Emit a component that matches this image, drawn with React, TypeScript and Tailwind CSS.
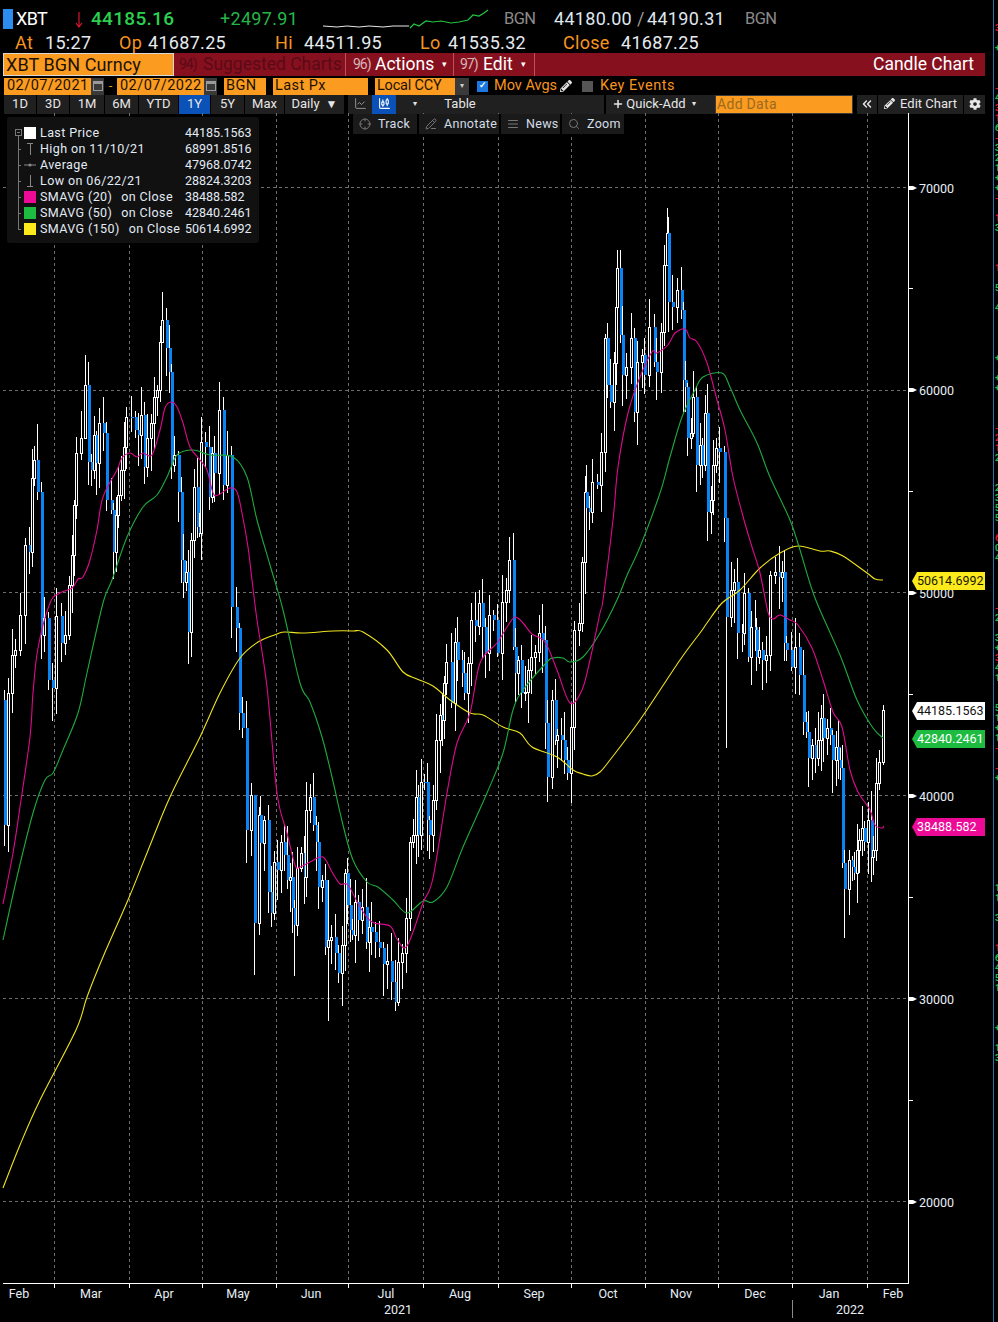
import type { ReactNode } from "react";
import { ChartCandlestick, ChartLine, Crosshair, PencilLine, AlignJustify, Search, ChevronsLeft, Plus } from "lucide-react";
import { FaCog, FaPencilAlt } from "react-icons/fa";

const FONT = "font-['Roboto',sans-serif]";

// [x, close y] in page pixels; a candle's body runs from the previous close to this one
const CLOSES: number[][] = [
  [5, 825], [9, 693], [13, 655], [16, 650], [21, 615], [26, 545], [30, 552], [33, 478], [35, 460], [38, 492], [42, 635], [45, 618], [49, 680], [53, 688], [57, 616], [62, 643], [66, 635], [70, 585],
  [73, 555], [75, 505], [77, 453], [82, 438], [86, 385], [89, 462], [92, 470], [95, 435], [97, 463], [100, 423], [104, 433], [107, 500], [112, 510], [114, 552], [117, 515], [119, 495], [122, 470], [125, 447], [127, 417], [132, 417], [136, 430], [139, 435], [142, 415], [145, 467], [148, 438], [152, 423], [155, 397], [158, 390], [161, 342], [163, 320], [167, 348], [170, 372], [172, 465], [175, 455], [179, 492], [182, 560], [184, 582], [187, 572], [189, 632],
  [192, 540], [195, 487], [198, 527], [200, 533], [202, 442], [206, 447], [210, 497], [213, 453], [215, 473], [220, 410], [224, 485], [228, 455], [232, 607], [237, 628], [240, 713], [243, 728], [247, 830], [252, 795], [255, 923], [260, 815], [261, 843], [265, 820], [269, 892], [272, 913], [275, 862], [278, 870], [282, 842], [285, 855], [288, 880], [291, 877], [293, 908], [295, 925], [298, 868],
  [302, 853], [305, 877], [307, 810], [311, 797], [314, 825], [317, 842], [319, 887], [323, 880], [326, 947], [329, 940], [332, 937], [336, 953], [339, 973], [343, 945], [346, 873], [348, 905], [351, 930], [353, 935], [356, 902], [359, 920], [363, 907], [367, 942], [370, 927], [372, 932], [376, 942], [380, 948], [384, 964], [388, 961], [392, 982], [396, 1002], [399, 962], [403, 953], [407, 918], [411, 842], [414, 835], [417, 797], [419, 835], [422, 782], [425, 782], [428, 820], [430, 835], [434, 800], [437, 740], [441, 715], [443, 720], [445, 683], [447, 662], [452, 703], [456, 642], [458, 660], [463, 673], [465, 693], [469, 663], [472, 620], [476, 626], [480, 603], [483, 627], [486, 653], [490, 615], [494, 620], [498, 653], [503, 602], [507, 590], [510, 560], [514, 647], [516, 673], [519, 660], [522, 693], [526, 692], [529, 670], [532, 657], [536, 652], [540, 633], [543, 640], [546, 723], [548, 777], [553, 700], [556, 740], [558, 735], [562, 740], [565, 760], [568, 773], [572, 727], [575, 630], [580, 623], [583, 562], [586, 492], [587, 508], [590, 512], [593, 482], [598, 485], [602, 452], [606, 338], [608, 385], [611, 402], [615, 363], [617, 307], [618, 268], [621, 335], [623, 375], [627, 367], [632, 338], [635, 412], [638, 362], [643, 355], [645, 375], [650, 327], [655, 362], [657, 372], [662, 332], [665, 265], [668, 233], [669, 302], [673, 307], [678, 290], [682, 310], [684, 380], [686, 387], [688, 438], [692, 433], [694, 397], [697, 465], [701, 445], [703, 465], [706, 413], [708, 512], [712, 500], [714, 465], [717, 448], [720, 452], [725, 518], [727, 617], [732, 590], [735, 582], [738, 633], [743, 633], [745, 593], [749, 657], [752, 627], [756, 630], [757, 657], [760, 650], [763, 660], [767, 655], [771, 575], [776, 572], [780, 577], [783, 572], [785, 643], [787, 650], [792, 667], [796, 647], [800, 675], [804, 722], [807, 732], [809, 758], [813, 745], [816, 758], [819, 740], [822, 718], [824, 738], [828, 728], [831, 735], [833, 760], [837, 747], [839, 760], [841, 768], [843, 863], [845, 889], [850, 860], [853, 867], [855, 873], [858, 850], [860, 840], [863, 828], [865, 842], [869, 820], [872, 857], [874, 850], [877, 783], [880, 762], [884, 710],
];

// the long wicks that stand out, x -> [high y, low y]
const SPIKES: Record<number, number[]> = {
  5: [690, 846], 38: [424, 500], 86: [355, 400], 163: [292, 330], 248: [780, 997], 255: [800, 975], 295: [900, 976], 329: [880, 1021], 396: [960, 1011], 514: [533, 650], 548: [700, 802], 618: [250, 290], 668: [208, 240], 727: [520, 748], 845: [850, 938], 850: [850, 915], 884: [705, 765], 880: [750, 790],
};

const MAGENTA = "3,904 13,853 20,807 30,737 33,693 38,648 50,603 60,593 72,588 78,579 83,577 90,560 97,530 103,497 117,470 122,458 130,453 137,457 143,453 152,455 160,430 165,408 171,402 177,407 183,423 190,447 200,460 207,470 213,493 218,495 230,488 237,492 242,513 248,547 252,580 257,620 267,687 277,793 287,833 295,865 300,867 310,862 323,857 332,872 340,884 348,885 360,907 372,922 390,926 397,939 407,946 423,903 433,878 447,793 457,743 470,713 480,663 497,643 507,627 515,617 523,623 532,634 545,642 557,670 570,703 582,690 590,660 600,613 603,600 613,520 618,467 628,413 640,377 652,352 657,353 668,345 675,333 685,329 690,338 697,342 707,363 717,400 725,430 733,477 744,520 752,547 760,573 768,612 773,619 780,615 790,620 798,625 812,648 823,680 833,712 842,727 850,770 858,792 870,810 875,825 882,828 884,826";
const GREEN = "3,940 17,877 33,813 45,780 53,773 63,750 78,713 87,673 103,603 112,580 127,537 143,507 157,495 167,477 177,455 193,450 210,455 233,457 247,477 257,520 270,565 283,610 300,683 310,702 322,737 332,777 343,825 353,860 367,882 378,887 393,900 407,913 423,901 433,902 447,887 463,847 487,793 503,753 513,710 523,690 547,662 553,658 563,658 570,662 583,657 600,633 617,600 628,573 640,547 660,493 670,457 682,417 695,390 703,377 722,373 730,387 740,410 757,443 770,477 790,520 800,550 815,598 840,655 857,700 873,728 883,738";
const YELLOW = "3,1188 20,1145 40,1100 76,1030 87,997 103,957 128,900 147,853 170,797 200,737 220,693 240,658 258,642 277,634 285,632 303,633 333,631 353,631 363,632 387,650 403,672 417,679 433,686 450,700 470,713 483,715 503,727 520,733 532,747 557,757 573,770 583,774 592,776 600,772 610,760 640,720 680,660 700,633 707,623 722,603 740,590 760,568 780,553 798,546 820,551 830,551 843,556 867,573 875,579 883,580";

const GRID_Y = [187.5, 390.5, 592.5, 795.5, 998.5, 1201.5];
const GRID_X = [54, 129, 202, 276, 348, 423, 498, 571, 645, 718, 792, 867];
const PRICES = [[70000, 188], [60000, 390], [50000, 593], [40000, 796], [30000, 999], [20000, 1202]];
const MINOR_Y = [288, 491, 694, 897, 1100];
const MONTHS: [string, number][] = [["Feb", 19], ["Mar", 91], ["Apr", 164], ["May", 238], ["Jun", 311], ["Jul", 386], ["Aug", 460], ["Sep", 534], ["Oct", 608], ["Nov", 681], ["Dec", 755], ["Jan", 829], ["Feb", 893]];

// cut-off text of the neighbouring panel; the row is (y - 8) / 10
const EDGE: Record<number, [string, boolean]> = {
  2: ["3", false], 4: ["+", true], 8: ["-", false], 9: ["4", true], 10: ["3", false], 11: ["1", false], 12: ["6", true], 13: ["-", false], 14: ["3", true], 15: ["2", true], 16: ["1", true], 17: ["+", true], 18: ["+", true], 19: ["-", false], 21: ["1", false], 22: ["3", true], 26: ["1", false], 28: ["5", true], 30: ["4", true], 35: ["+", true], 37: ["+", true], 38: ["+", true], 42: ["-", false], 43: ["2", false], 44: ["1", false], 45: ["2", true], 48: ["2", true], 49: ["3", true], 50: ["5", true], 51: ["5", true], 53: ["6", false], 54: ["0", true], 55: ["4", true], 60: ["-", false], 61: ["2", true], 63: ["3", true], 64: ["+", true], 65: ["3", false], 66: ["4", true], 67: ["1", true], 70: ["5", true], 71: ["1", true], 72: ["+", true], 73: ["1", true], 74: ["-", false], 76: ["-", false], 77: ["+", true], 88: ["1", true], 89: ["1", true], 91: ["3", true], 94: ["1", false], 95: ["6", true], 96: ["4", true], 97: ["5", true], 98: ["1", true], 102: ["+", true], 104: ["1", true], 105: ["3", true],
};

// catmull-rom through the read-off points so the averages don't look faceted
function smooth(points: string) {
  const p = points.split(" ").map((s) => s.split(",").map(Number));
  let d = `M${p[0][0]},${p[0][1]}`;
  for (let i = 0; i < p.length - 1; i++) {
    const a = p[Math.max(i - 1, 0)];
    const b = p[i];
    const c = p[i + 1];
    const e = p[Math.min(i + 2, p.length - 1)];
    d += ` C${b[0] + (c[0] - a[0]) / 6},${b[1] + (c[1] - a[1]) / 6} ${c[0] - (e[0] - b[0]) / 6},${c[1] - (e[1] - b[1]) / 6} ${c[0]},${c[1]}`;
  }
  return d;
}

function Candles() {
  return (
    <g shapeRendering="crispEdges">
      {CLOSES.map(([x, y], i) => {
        const prev = i === 0 ? 700 : CLOSES[i - 1][1];
        const top = Math.min(prev, y);
        const bottom = Math.max(prev, y);
        const spike = SPIKES[x];
        const high = spike ? spike[0] : top - (4 + ((i * 37) % 26));
        const low = spike ? spike[1] : bottom + (4 + ((i * 53) % 30));
        const up = y < prev;
        return (
          <g key={i}>
            <line x1={x - 0.5} x2={x - 0.5} y1={high} y2={low} stroke="#fff" />
            {up ? (
              <rect x={x - 1.5} y={top + 0.5} width={2} height={bottom - top} fill="#000" stroke="#fff" />
            ) : (
              <rect x={x - 1} y={top} width={2.5} height={Math.max(bottom - top, 1)} fill="#0a84f5" />
            )}
          </g>
        );
      })}
    </g>
  );
}

function ChartCanvas() {
  return (
    <svg width={993} height={1209} viewBox="0 113 993 1209" className="block">
      {GRID_Y.map((y) => (
        <line key={y} x1={3} x2={909} y1={y} y2={y} stroke="#6e6e6e" strokeDasharray="3 3" />
      ))}
      {GRID_X.map((x) => (
        <line key={x} x1={x + 0.5} x2={x + 0.5} y1={113} y2={1283} stroke="#6e6e6e" strokeDasharray="3 3" />
      ))}
      <Candles />
      <path d={smooth(YELLOW)} fill="none" stroke="#efe31e" strokeWidth={1.1} />
      <path d={smooth(GREEN)} fill="none" stroke="#1faa3c" strokeWidth={1.1} />
      <path d={smooth(MAGENTA)} fill="none" stroke="#de0a8f" strokeWidth={1.1} />
      <g shapeRendering="crispEdges" stroke="#fff">
        <line x1={908.5} x2={908.5} y1={113} y2={1284} />
        <line x1={3} x2={909} y1={1283.5} y2={1283.5} />
        {MINOR_Y.map((y) => (
          <line key={y} x1={909} x2={913} y1={y + 0.5} y2={y + 0.5} />
        ))}
        {GRID_X.map((x) => (
          <line key={x} x1={x + 0.5} x2={x + 0.5} y1={1283} y2={1288} />
        ))}
      </g>
      <line x1={792.5} x2={792.5} y1={1300} y2={1318} stroke="#8a8a8a" shapeRendering="crispEdges" />
      {PRICES.map(([p, y]) => (
        <g key={p}>
          <polygon points={`909,${y - 2} 913,${y - 2} 917,${y} 913,${y + 2} 909,${y + 2}`} fill="#fff" />
          <text x={919} y={y + 4.5} fill="#e6eef7" fontFamily="Roboto, sans-serif" fontSize={12.5}>{p}</text>
        </g>
      ))}
      <g fill="#e6eef7" fontFamily="Roboto, sans-serif" fontSize={12.5} textAnchor="middle">
        {MONTHS.map(([m, x]) => (
          <text key={x} x={x} y={1298}>{m}</text>
        ))}
        <text x={398} y={1314}>2021</text>
        <text x={850} y={1314}>2022</text>
      </g>
    </svg>
  );
}

function Tree({ first, last }: { first?: boolean; last?: boolean }) {
  return (
    <svg width={10} height={16} viewBox="0 0 10 16" className="shrink-0" shapeRendering="crispEdges">
      {first ? (
        <g>
          <rect x={1.5} y={4.5} width={6} height={6} fill="none" stroke="#777" />
          <line x1={3} x2={6} y1={7.5} y2={7.5} stroke="#777" />
          <line x1={4.5} x2={4.5} y1={11} y2={16} stroke="#777" />
        </g>
      ) : (
        <g stroke="#777">
          <line x1={4.5} x2={4.5} y1={0} y2={last ? 9 : 16} />
          <line x1={4} x2={7} y1={8.5} y2={8.5} />
        </g>
      )}
    </svg>
  );
}

function Mark({ kind }: { kind: "high" | "avg" | "low" }) {
  return (
    <svg width={12} height={14} viewBox="0 0 12 14" stroke="#888" fill="#888">
      {kind === "high" && (
        <g shapeRendering="crispEdges">
          <line x1={3} x2={9} y1={1.5} y2={1.5} />
          <line x1={6.5} x2={6.5} y1={1} y2={13} />
        </g>
      )}
      {kind === "avg" && (
        <g>
          <line x1={0} x2={12} y1={7} y2={7} />
          <circle cx={6} cy={7} r={1.6} stroke="none" />
        </g>
      )}
      {kind === "low" && (
        <g shapeRendering="crispEdges">
          <line x1={3} x2={9} y1={12.5} y2={12.5} />
          <line x1={6.5} x2={6.5} y1={1} y2={13} />
        </g>
      )}
    </svg>
  );
}

function LegendRow({ mark, label, on, value, first, last }: { mark: ReactNode; label: string; on?: boolean; value: string; first?: boolean; last?: boolean }) {
  return (
    <div className="flex h-[16px] items-center text-[12.5px] leading-[16px] whitespace-nowrap text-[#e3ebf5]">
      <Tree first={first} last={last} />
      <span className="flex w-[16px] shrink-0 items-center justify-start">{mark}</span>
      <span className="flex w-[145px] shrink-0 tracking-[0.4px]">
        {label}
        {on && <span className="ml-[9px]">on Close</span>}
      </span>
      <span>{value}</span>
    </div>
  );
}

function Legend() {
  const swatch = (c: string) => <span className={`block h-[12px] w-[12px] ${c}`} />;
  return (
    <div className="absolute top-[4px] left-[7px] h-[126px] w-[252px] rounded-[3px] bg-[#111111] pt-[8px] pl-[7px]">
      <LegendRow first mark={swatch("bg-white")} label="Last Price" value="44185.1563" />
      <LegendRow mark={<Mark kind="high" />} label="High on 11/10/21" value="68991.8516" />
      <LegendRow mark={<Mark kind="avg" />} label="Average" value="47968.0742" />
      <LegendRow mark={<Mark kind="low" />} label="Low on 06/22/21" value="28824.3203" />
      <LegendRow mark={swatch("bg-[#ec0a97]")} label="SMAVG (20)" on value="38488.582" />
      <LegendRow mark={swatch("bg-[#1dbb3f]")} label="SMAVG (50)" on value="42840.2461" />
      <LegendRow last mark={swatch("bg-[#fdea1c]")} label="SMAVG (150)" on value="50614.6992" />
    </div>
  );
}

function FloatTool({ icon, label, w }: { icon: ReactNode; label: string; w: string }) {
  return (
    <div className={`flex h-[20px] items-center gap-[7px] bg-[#1a1a1a] pl-[6px] text-[12.5px] tracking-[0.3px] text-[#d5dde6] ${w}`}>
      {icon}
      {label}
    </div>
  );
}

function Tag({ top, bg, text, border, children }: { top: string; bg: string; text: string; border: string; children: ReactNode }) {
  return (
    <div className={`absolute left-[912px] flex h-[18px] items-center ${top}`}>
      <span className={`h-0 w-0 border-y-[9px] border-r-[5px] border-y-transparent ${border}`} />
      <span className={`flex h-[18px] w-[68px] items-center text-[12.5px] whitespace-nowrap ${bg} ${text}`}>{children}</span>
    </div>
  );
}

function Tab({ w, active, children }: { w: string; active?: boolean; children: ReactNode }) {
  return (
    <div className={`flex h-[19px] shrink-0 items-center justify-center pb-[2px] text-[13px] whitespace-nowrap text-[#e6e6e6] ${w} ${active ? "bg-[#0a52b8]" : "bg-[#202020]"}`}>
      {children}
    </div>
  );
}

function Cal() {
  return (
    <span className="flex h-[17px] w-[13px] shrink-0 items-center justify-center bg-[#3a3a3a]">
      <svg width={10} height={10} viewBox="0 0 10 10" shapeRendering="crispEdges">
        <rect x={0} y={0} width={10} height={10} fill="#9a9a9a" />
        <rect x={1} y={3} width={8} height={6} fill="#3a3a3a" />
      </svg>
    </span>
  );
}

function Field({ w, children }: { w: string; children: ReactNode }) {
  return <span className={`flex h-[17px] shrink-0 items-center bg-[#fb9b1f] pl-[2px] text-[14.5px] tracking-[0.45px] whitespace-nowrap text-[#1b1204] ${w}`}>{children}</span>;
}

function Header() {
  const big = "text-[18px] tracking-[0.3px] whitespace-nowrap";
  return (
    <div className="flex h-[113px] flex-col">
      <div className={`flex h-[30px] items-start pt-[9px] pl-[3px] leading-[20px] text-[#dfe6ee] ${big}`}>
        <span className="h-[20px] w-[10px] shrink-0 bg-[#2d8cf0]" />
        <span className="ml-[3px] w-[58px] shrink-0 tracking-[-0.6px] text-white">XBT</span>
        <span className="w-[17px] shrink-0 pt-[3px]">
          <svg width={10} height={16} viewBox="0 0 10 16" stroke="#d9182e" strokeWidth={1.2} fill="none">
            <path d="M5 0V15M2 11l3 4 3-4" />
          </svg>
        </span>
        <span className="w-[129px] shrink-0 text-[19px] font-medium text-[#2bd04f]">44185.16</span>
        <span className="w-[103px] shrink-0 text-[#25b648]">+2497.91</span>
        <svg width={167} height={24} viewBox="0 0 167 24" className="-mt-[2px] shrink-0">
          <polyline points="0,19 14,20 24,19 36,20 46,19 60,20 70,19 86,19" fill="none" stroke="#e8e8e8" strokeWidth={1} />
          <polyline points="87,21 91,17 96,19 103,14 110,15 118,14 128,16 136,15 145,13 150,8 156,9 161,6 165,3" fill="none" stroke="#22c63f" strokeWidth={1.2} />
        </svg>
        <span className="ml-[14px] w-[50px] shrink-0 text-[16.5px] tracking-[-0.6px] text-[#8a8a8a]">BGN</span>
        <span className="w-[83px] shrink-0">44180.00</span>
        <span className="w-[10px] shrink-0 text-[#9a9a9a]">/</span>
        <span className="w-[98px] shrink-0">44190.31</span>
        <span className="text-[16.5px] tracking-[-0.6px] text-[#8a8a8a]">BGN</span>
      </div>
      <div className={`flex h-[23px] items-center pt-[2px] pl-[15px] text-[#e6ebf0] ${big}`}>
        <span className="w-[30px] shrink-0 text-[#f79420]">At</span>
        <span className="w-[74px] shrink-0">15:27</span>
        <span className="w-[29px] shrink-0 text-[#f79420]">Op</span>
        <span className="w-[127px] shrink-0">41687.25</span>
        <span className="w-[29px] shrink-0 text-[#f79420]">Hi</span>
        <span className="w-[116px] shrink-0">44511.95</span>
        <span className="w-[28px] shrink-0 text-[#f79420]">Lo</span>
        <span className="w-[115px] shrink-0">41535.32</span>
        <span className="w-[58px] shrink-0 text-[#f79420]">Close</span>
        <span>41687.25</span>
      </div>
      <div className="flex h-[23px] pl-[3px] whitespace-nowrap">
        <div className="flex w-[171px] shrink-0 items-center border border-[#d8d8d8] bg-[#fb9b1f] pl-[2px] text-[18px] tracking-[0.1px] text-[#1b1204]">XBT BGN Curncy</div>
        <div className="flex w-[811px] shrink-0 items-center bg-[#87101f] text-[17.5px] text-white">
          <span className="flex h-full w-[172px] items-center border-r border-[#c0505c] pl-[5px] text-[#5a0a16]">
            <span className="w-[24px] shrink-0 text-[14px] tracking-[-1px]">94)</span>Suggested Charts
          </span>
          <span className="flex h-full w-[108px] items-center border-r border-[#c0505c] pl-[7px]">
            <span className="w-[22px] shrink-0 text-[14px] tracking-[-1px] text-[#d8b4b8]">96)</span>Actions<span className="ml-[8px] text-[9px]">▾</span>
          </span>
          <span className="flex h-full w-[81px] items-center border-r border-[#c0505c] pl-[6px]">
            <span className="w-[23px] shrink-0 text-[14px] tracking-[-1px] text-[#d8b4b8]">97)</span>Edit<span className="ml-[8px] text-[9px]">▾</span>
          </span>
          <span className="flex flex-1 justify-end pr-[11px]">Candle Chart</span>
        </div>
      </div>
      <div className="mt-[1px] flex h-[18px] items-center pl-[4px] whitespace-nowrap">
        <Field w="w-[87px]"><span className="ml-[1px]">02/07/2021</span></Field>
        <Cal />
        <span className="w-[13px] shrink-0 text-center text-[13px] text-[#f79420]">-</span>
        <Field w="w-[87px]"><span className="ml-[1px]">02/07/2022</span></Field>
        <Cal />
        <span className="w-[7px] shrink-0" />
        <Field w="w-[42px]">BGN</Field>
        <span className="w-[7px] shrink-0" />
        <Field w="w-[95px]">Last Px</Field>
        <span className="w-[7px] shrink-0" />
        <Field w="w-[80px]"><span className="tracking-[-0.2px]">Local CCY</span></Field>
        <span className="flex h-[17px] w-[14px] shrink-0 items-center justify-center bg-[#3a3a3a] text-[8px] text-[#ccc]">▾</span>
        <span className="ml-[8px] flex h-[11px] w-[11px] shrink-0 items-center justify-center bg-[#1a78e0] text-[9px] font-bold text-white">✓</span>
        <span className="ml-[6px] w-[66px] shrink-0 text-[14.5px] tracking-[0px] text-[#f7941e]">Mov Avgs</span>
        <FaPencilAlt className="size-[12px] shrink-0 text-[#e0e0e0]" />
        <span className="ml-[10px] h-[11px] w-[11px] shrink-0 bg-[#555]" />
        <span className="ml-[7px] text-[14.5px] tracking-[0.5px] text-[#f7941e]">Key Events</span>
      </div>
      <div className="flex h-[19px] items-center pl-[4px]">
        <div className="flex gap-[1px]">
          <Tab w="w-[32px]">1D</Tab>
          <Tab w="w-[32px]">3D</Tab>
          <Tab w="w-[34px]">1M</Tab>
          <Tab w="w-[33px]">6M</Tab>
          <Tab w="w-[39px]">YTD</Tab>
          <Tab w="w-[31px]" active>1Y</Tab>
          <Tab w="w-[33px]">5Y</Tab>
          <Tab w="w-[39px]">Max</Tab>
          <Tab w="w-[59px]">Daily<span className="ml-[6px] text-[12px]">▼</span></Tab>
        </div>
        <div className="ml-[4px] flex items-center">
          <Tab w="w-[24px]"><ChartLine className="size-[13px] text-[#aaa]" strokeWidth={1.5} /></Tab>
          <Tab w="w-[24px]" active><ChartCandlestick className="size-[13px] text-white" strokeWidth={2} /></Tab>
          <Tab w="w-[33px]"><span className="pl-[5px] text-[8px]">▾</span></Tab>
          <Tab w="w-[62px]">Table</Tab>
          <Tab w="w-[113px]"> </Tab>
        </div>
        <div className="ml-[2px] flex items-center">
          <Tab w="w-[96px]"><Plus className="mr-[2px] size-[12px]" strokeWidth={3} />Quick-Add<span className="ml-[6px] text-[8px]">▾</span></Tab>
          <Tab w="w-[13px]"> </Tab>
        </div>
        <div className="flex h-[19px] w-[138px] shrink-0 items-center border border-[#3a3a3a] bg-[#fb9b1f] pb-[1px] pl-[1px] text-[14px] tracking-[0.3px] text-[#9a6a22]">Add Data</div>
        <div className="ml-[4px] flex gap-[1px]">
          <Tab w="w-[20px]"><ChevronsLeft className="size-[14px]" strokeWidth={2.5} /></Tab>
          <Tab w="w-[85px]"><FaPencilAlt className="mr-[5px] size-[11px]" />Edit Chart</Tab>
          <Tab w="w-[21px]"><FaCog className="size-[12px]" /></Tab>
        </div>
      </div>
    </div>
  );
}

function EdgeStrip() {
  return (
    <div className="h-[1322px] w-[5px] shrink-0 overflow-hidden border-l-[1.5px] border-[#2a6fa8] pt-[3px] pl-[1px] text-[9px] leading-[10px] font-bold">
      {Array.from({ length: 132 }, (_, i) => {
        const cell = EDGE[i];
        return (
          <div key={i} className={`h-[10px] ${cell && cell[1] ? "text-[#1fc24a]" : "text-[#e8132b]"}`}>
            {cell ? cell[0] : ""}
          </div>
        );
      })}
    </div>
  );
}

export default function App() {
  return (
    <div className={`flex h-[1322px] w-[998px] overflow-hidden bg-black ${FONT}`}>
      <div className="flex w-[993px] shrink-0 flex-col">
        <Header />
        <div className="relative flex-1">
          <ChartCanvas />
          <Legend />
          <div className="absolute top-[1px] left-[353px] flex gap-[2px]">
            <FloatTool w="w-[64px]" icon={<Crosshair className="size-[12px] text-[#777]" />} label="Track" />
            <FloatTool w="w-[80px]" icon={<PencilLine className="size-[12px] text-[#777]" />} label="Annotate" />
            <FloatTool w="w-[59px]" icon={<AlignJustify className="size-[12px] text-[#777]" />} label="News" />
            <FloatTool w="w-[62px]" icon={<Search className="size-[12px] text-[#777]" />} label="Zoom" />
          </div>
          <Tag top="top-[459px]" bg="bg-[#fdea1c]" text="text-[#1a1a00]" border="border-r-[#fdea1c]">50614.6992</Tag>
          <Tag top="top-[589px]" bg="bg-white" text="text-[#111]" border="border-r-white">44185.1563</Tag>
          <Tag top="top-[617px]" bg="bg-[#1dbb3f]" text="text-white" border="border-r-[#1dbb3f]">42840.2461</Tag>
          <Tag top="top-[705px]" bg="bg-[#ec0a97]" text="text-white" border="border-r-[#ec0a97]">38488.582</Tag>
        </div>
      </div>
      <EdgeStrip />
    </div>
  );
}
